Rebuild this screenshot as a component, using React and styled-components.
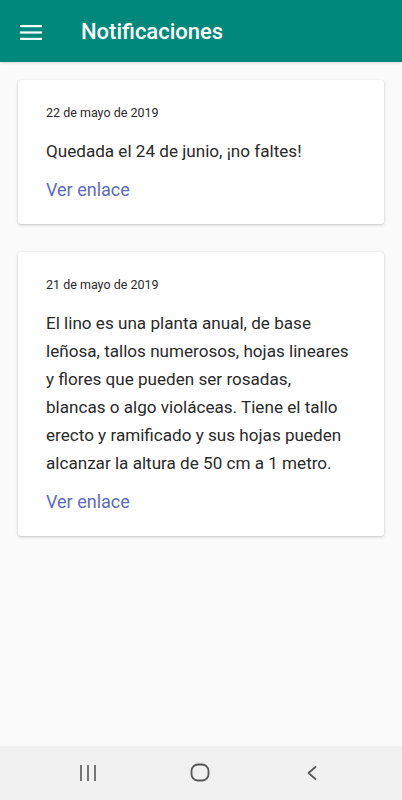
import React from "react";
import styled, { createGlobalStyle } from "styled-components";

const notifications = [
  {
    id: 1,
    date: "22 de mayo de 2019",
    text: "Quedada el 24 de junio, ¡no faltes!",
  },
  {
    id: 2,
    date: "21 de mayo de 2019",
    text:
      "El lino es una planta anual, de base leñosa, tallos numerosos, hojas lineares y flores que pueden ser rosadas, blancas o algo violáceas. Tiene el tallo erecto y ramificado y sus hojas pueden alcanzar la altura de 50 cm a 1 metro.",
  },
];

const App = () => {
  return (
    <Screen>
      <GlobalStyle />
      <AppBar>
        <MenuButton aria-label="menu">
          <svg width="22" height="16" viewBox="0 0 22 16">
            <rect x="0" y="1" width="22" height="2.2" fill="#fff" />
            <rect x="0" y="7.4" width="22" height="2.2" fill="#fff" />
            <rect x="0" y="13.8" width="22" height="2.2" fill="#fff" />
          </svg>
        </MenuButton>
        <Title>Notificaciones</Title>
      </AppBar>

      <Content>
        {notifications.map((n) => (
          <Card key={n.id}>
            <DateLabel>{n.date}</DateLabel>
            <Body>{n.text}</Body>
            <Link href="#">Ver enlace</Link>
          </Card>
        ))}
      </Content>

      <NavBar>
        <NavButton aria-label="recientes">
          <svg width="18" height="18" viewBox="0 0 18 18">
            <g stroke="#555" strokeWidth="1.6">
              <line x1="2" y1="1" x2="2" y2="17" />
              <line x1="9" y1="1" x2="9" y2="17" />
              <line x1="16" y1="1" x2="16" y2="17" />
            </g>
          </svg>
        </NavButton>
        <NavButton aria-label="inicio">
          <svg width="20" height="20" viewBox="0 0 20 20">
            <rect
              x="1.5"
              y="1.5"
              width="17"
              height="16"
              rx="6.5"
              fill="none"
              stroke="#555"
              strokeWidth="1.8"
            />
          </svg>
        </NavButton>
        <NavButton aria-label="atrás">
          <svg width="12" height="16" viewBox="0 0 12 16">
            <polyline
              points="10,1.5 2.5,8 10,14.5"
              fill="none"
              stroke="#555"
              strokeWidth="1.7"
              strokeLinejoin="round"
            />
          </svg>
        </NavButton>
      </NavBar>
    </Screen>
  );
};

export default App;

const GlobalStyle = createGlobalStyle`
  * {
    box-sizing: border-box;
  }
  body {
    margin: 0;
    font-family: Roboto, "Liberation Sans", sans-serif;
    background: #fafafa;
  }
`;

const Screen = styled.div`
  height: 100vh;
  display: flex;
  flex-direction: column;
  background: #fafafa;
`;

const AppBar = styled.header`
  height: 62px;
  flex-shrink: 0;
  display: flex;
  align-items: center;
  padding: 0 20px;
  background: #00897b;
  box-shadow: 0 1px 3px rgba(0, 0, 0, 0.15);
`;

const MenuButton = styled.button`
  border: 0;
  padding: 0;
  background: transparent;
  display: flex;
  margin-top: 2px;
  cursor: pointer;
`;

const Title = styled.h1`
  margin: 0 0 0 39px;
  color: #fff;
  font-size: 22px;
  font-weight: 500;
`;

const Content = styled.main`
  flex: 1;
  display: flex;
  flex-direction: column;
  gap: 28px;
  padding: 18px 18px 0;
`;

const Card = styled.article`
  background: #fff;
  border-radius: 3px;
  box-shadow: 0 1px 3px rgba(0, 0, 0, 0.22), 0 0 1px rgba(0, 0, 0, 0.06);
  padding: 24px 30px 20px 28px;
  display: flex;
  flex-direction: column;
  align-items: flex-start;
`;

const DateLabel = styled.div`
  font-size: 12.5px;
  line-height: 18px;
  color: #2a2a2a;
`;

const Body = styled.p`
  margin: 15px 0 0;
  font-size: 17.1px;
  line-height: 28px;
  color: #2a2a2a;
`;

const Link = styled.a`
  margin-top: 11px;
  font-size: 18px;
  line-height: 28px;
  color: #5c6bc0;
  text-decoration: none;
`;

const NavBar = styled.nav`
  height: 54px;
  flex-shrink: 0;
  display: flex;
  align-items: center;
  justify-content: center;
  gap: 72px;
  padding-right: 3px;
  background: #f1f1f1;
`;

const NavButton = styled.button`
  border: 0;
  padding: 0;
  background: transparent;
  display: flex;
  width: 40px;
  justify-content: center;
`;
